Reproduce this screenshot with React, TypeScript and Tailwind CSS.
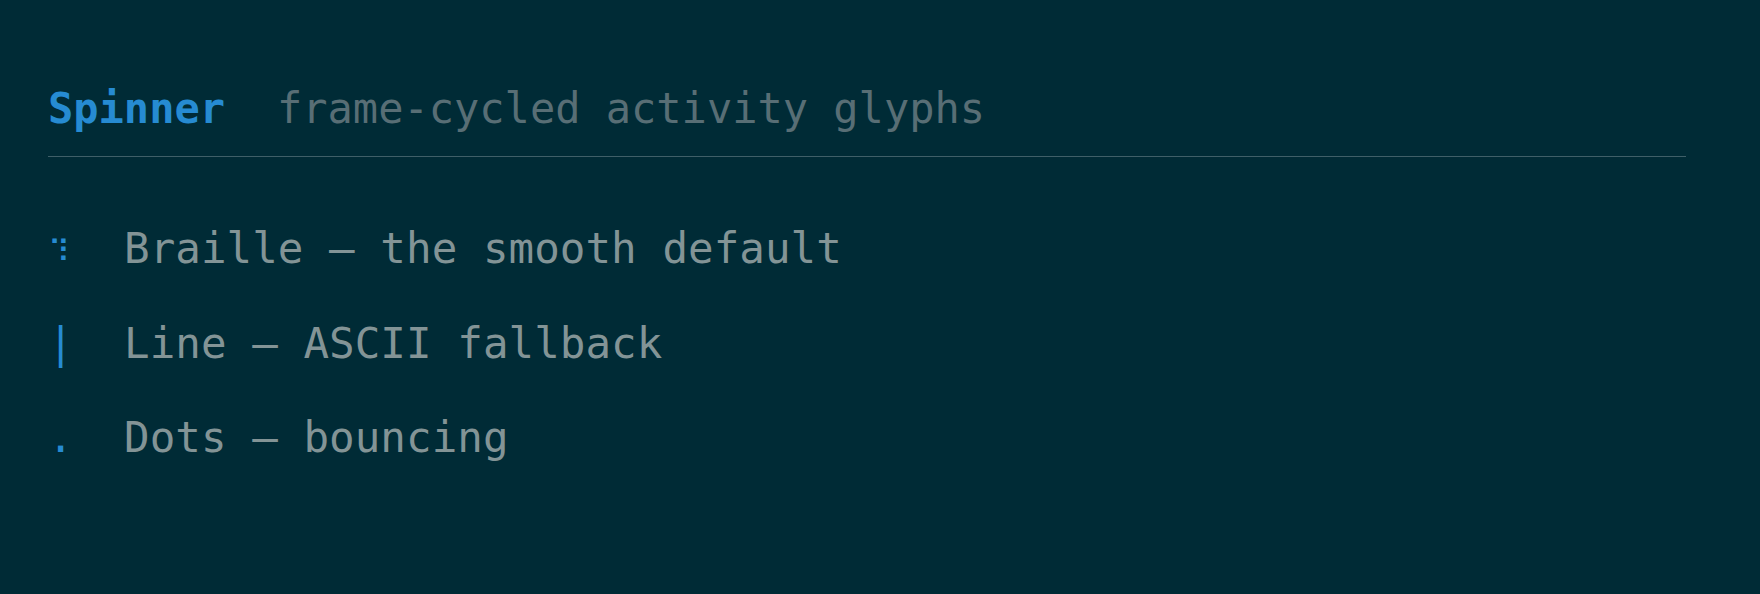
const rows = [
  { glyph: "⠹", label: "Braille — the smooth default", small: true },
  { glyph: "|", label: "Line — ASCII fallback", small: false },
  { glyph: ".", label: "Dots — bouncing", small: false },
];

export default function App() {
  return (
    <div className="min-h-screen bg-[#002b36] pl-[48px] pr-[74px] pt-[84px] font-['DejaVu_Sans_Mono',monospace] text-[42px]">
      <div className="flex leading-[50px]">
        <span className="font-bold text-[#268bd2]">Spinner</span>
        <span className="ml-[52px] text-[#586e75]">frame-cycled activity glyphs</span>
      </div>
      <div className="mt-[22px] h-px bg-[#3f5f68]" />
      <div className="mt-[67px] flex flex-col gap-[44.5px]">
        {rows.map((r) => (
          <div key={r.label} className="flex h-[50px] items-baseline leading-[50px] whitespace-pre">
            <span className="w-[76px] shrink-0 text-[#268bd2]">
              {r.small ? (
                <span className="inline-block -translate-y-[1px] text-[30px] leading-none">{r.glyph}</span>
              ) : (
                r.glyph
              )}
            </span>
            <span className="text-[42.5px] tracking-[0.05px] text-[#839496]">{r.label}</span>
          </div>
        ))}
      </div>
    </div>
  );
}
